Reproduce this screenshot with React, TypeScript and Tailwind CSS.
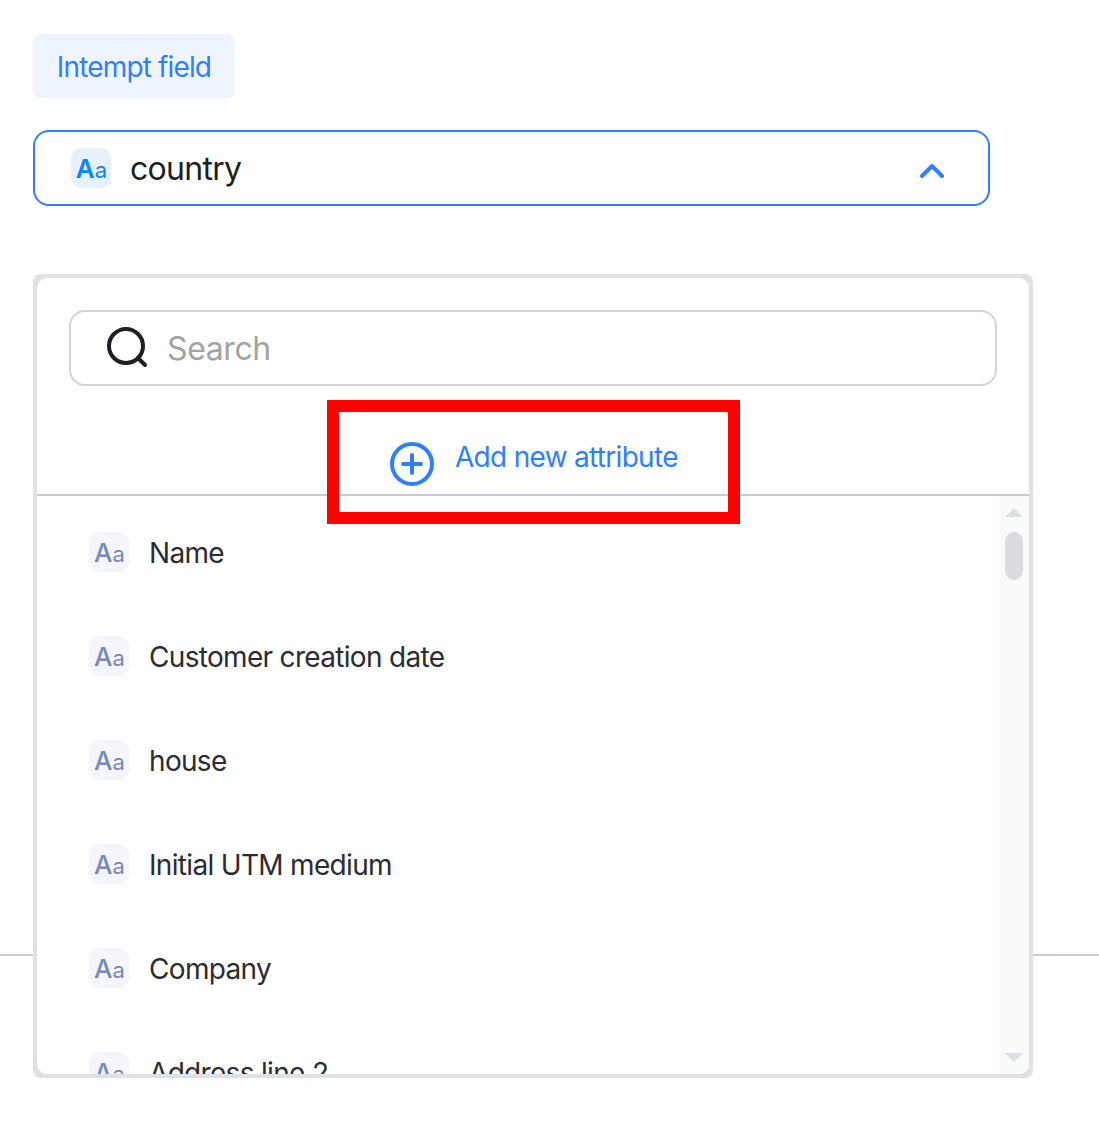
import React from 'react';

const attributes = ['Name', 'Customer creation date', 'house', 'Initial UTM medium', 'Company', 'Address line 2'];

const TypeBadge: React.FC<{ active?: boolean }> = ({ active }) => (
  <div
    className={`flex h-10 w-10 shrink-0 items-baseline justify-center rounded-[10px] pt-[7px] pl-[1px] leading-[28px] tracking-normal ${
      active ? 'bg-[#e6f1fd] text-[#0a84ff]' : 'bg-[#f5f6fb] text-[#7d88b5]'
    }`}
  >
    <span className={`text-[26px] ${active ? 'font-semibold' : 'font-medium'}`}>A</span>
    <span className="text-[22px]">a</span>
  </div>
);

export default function App() {
  return (
    <div className="relative h-[1124px] w-full overflow-hidden bg-white pl-[33px] pt-[34px] font-['Inter',sans-serif]">
      {/* line of the page behind the dropdown */}
      <div className="absolute left-0 right-0 top-[954px] h-[2px] bg-[#c8ccd9]" />

      <div className="flex h-16 w-[202px] items-center justify-center rounded-lg bg-[#eff5ff] pt-[2px] text-[28px] tracking-[-0.85px] text-[#2e7fff]">
        Intempt field
      </div>

      <div className="mt-8 flex h-[76px] w-[957px] items-center rounded-[16px] border-2 border-[#2e7fff] bg-white pl-[36px] pr-[42px]">
        <TypeBadge active />
        <span className="ml-[19px] mt-[2px] flex-1 text-[32px] tracking-[-0.7px] text-[#1d1f24]">country</span>
        <svg className="mt-[4px] h-4 w-7" viewBox="0 0 28 16" fill="none" stroke="#2e7fff" strokeWidth="4" strokeLinecap="round" strokeLinejoin="round">
          <path d="M4 14 14 4l10 10" />
        </svg>
      </div>

      <div className="relative mt-[68px] h-[804px] w-[1000px] rounded-[8px] border-4 border-[#dfe1e5] bg-[#dfe1e5]">
        <div className="flex h-full flex-col overflow-hidden rounded-[10px] bg-white">
          <div className="px-[32px] pt-[32px]">
            <div className="flex h-[76px] items-center rounded-[16px] border-2 border-[#d2d4d9] pl-[36px]">
              <svg className="h-[42px] w-[42px] text-[#1d1f24]" viewBox="0 0 42 42" fill="none" stroke="currentColor" strokeWidth="4" strokeLinecap="round">
                <circle cx="19" cy="19" r="17" />
                <path d="m31 31 7 7" />
              </svg>
              <span className="ml-[18px] mt-[2px] text-[32px] tracking-[-0.4px] text-[#a3a3a3]">Search</span>
            </div>
          </div>

          <div className="flex h-[110px] shrink-0 border-b-2 border-[#c8ccd9] pl-[353px] pt-[56px]">
            <svg className="h-11 w-11" viewBox="0 0 44 44" fill="none" stroke="#2e7fff" strokeWidth="4" strokeLinecap="round">
              <circle cx="22" cy="22" r="20" />
              <path d="M22 13v18M13 22h18" />
            </svg>
            <span className="ml-[21px] mt-[-3px] text-[28px] leading-[36px] tracking-[-0.7px] text-[#2e7fff]">Add new attribute</span>
          </div>

          <div className="flex min-h-0 flex-1">
            <div className="flex-1 overflow-hidden pl-[52px] pt-[36px]">
              {attributes.map((name) => (
                <div key={name} className="mb-[64px] flex h-10 items-center gap-5 text-[28px] tracking-[-0.68px] text-[#2a2c31]">
                  <TypeBadge />
                  <span className="mt-[2px]">{name}</span>
                </div>
              ))}
            </div>
            <div className="flex w-[30px] shrink-0 flex-col items-center bg-[#fafafa] pt-[12px]">
              <div className="h-0 w-0 border-x-[9px] border-b-[9px] border-x-transparent border-b-[#dcdfe5]" />
              <div className="mt-[15px] h-12 w-[18px] rounded-full bg-[#dadce2]" />
              <div className="mt-auto mb-[12px] h-0 w-0 border-x-[9px] border-t-[9px] border-x-transparent border-t-[#dcdfe5]" />
            </div>
          </div>
        </div>
      </div>

      {/* annotation drawn over the screenshot */}
      <div className="absolute left-[327px] top-[400px] h-[124px] w-[413px] border-[12px] border-[#ff0000]" />
    </div>
  );
}
